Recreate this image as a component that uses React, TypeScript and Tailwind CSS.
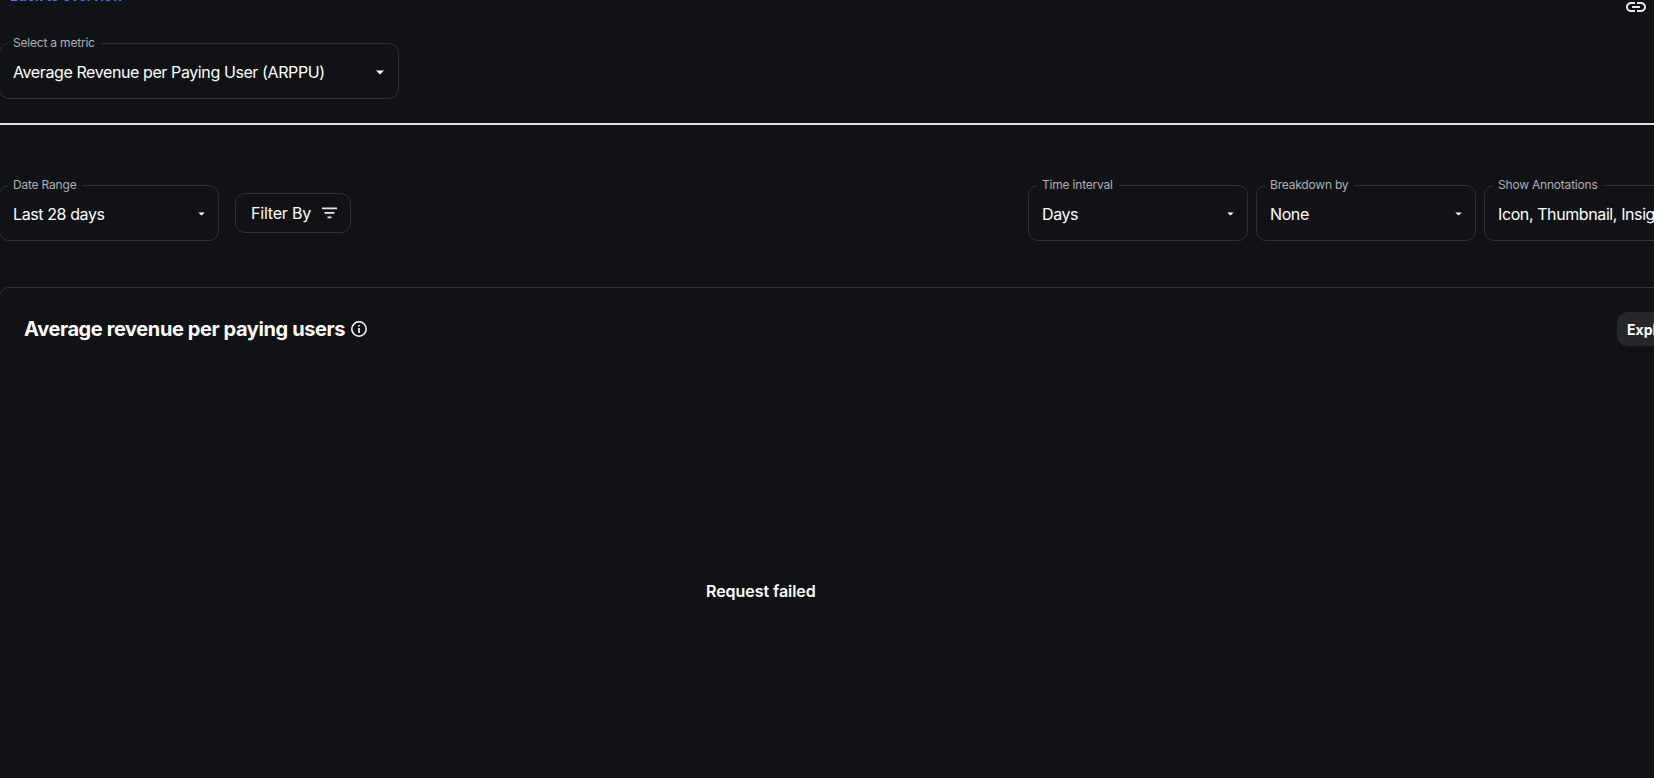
import type { ReactNode } from 'react';

const FONT = "font-['Inter','Noto_Sans',sans-serif]";

function Caret({ small = false }: { small?: boolean }) {
  return (
    <svg width={small ? 7 : 8} height={small ? 4 : 5} viewBox="0 0 8 5" className="shrink-0 fill-white">
      <path d="M0 0.5h8L4 4.5z" />
    </svg>
  );
}

function SelectBox({
  label,
  value,
  className,
  caret = true,
  small = true,
}: {
  label: string;
  value: string;
  className: string;
  caret?: boolean;
  small?: boolean;
}) {
  return (
    <fieldset
      className={`h-[63px] shrink-0 rounded-[10px] border border-[#2e3034] pl-[13px] ${small ? 'pr-[13px]' : 'pr-[14px]'} ${className}`}
    >
      <legend className="ml-[-5px] pl-[5px] pr-[6px] text-[12px] leading-[14px] tracking-[-0.2px] text-[#aeb0b4]">
        {label}
      </legend>
      <div className="flex h-[44px] items-center justify-between">
        <span className="whitespace-nowrap text-[16px] tracking-[-0.4px] text-white">{value}</span>
        {caret && <Caret small={small} />}
      </div>
    </fieldset>
  );
}

function Row({ children, className }: { children: ReactNode; className: string }) {
  return <div className={`flex items-center ${className}`}>{children}</div>;
}

export default function App() {
  return (
    <div className={`h-[778px] w-[1654px] overflow-hidden bg-[#111216] ${FONT}`}>
      {/* page is scrolled, top bar is cut off */}
      <div className="ml-[10px] mr-[6px] mt-[-14px] flex h-[22px] items-end justify-between">
        <a className="mb-[4px] text-[14px] font-semibold leading-[17px] tracking-[-0.15px] text-[#3e7bfa]">
          Back to overview
        </a>
        <svg width="24" height="24" viewBox="0 0 24 24" className="mb-[-11px] fill-[#e6e6e6]">
          <path d="M3.9 12c0-1.71 1.39-3.1 3.1-3.1h4V7H7c-2.76 0-5 2.24-5 5s2.24 5 5 5h4v-1.9H7c-1.71 0-3.1-1.39-3.1-3.1zM8 13h8v-2H8v2zm9-6h-4v1.9h4c1.71 0 3.1 1.39 3.1 3.1s-1.39 3.1-3.1 3.1h-4V17h4c2.76 0 5-2.24 5-5s-2.24-5-5-5z" />
        </svg>
      </div>

      <Row className="ml-[-1px] mt-[28px]">
        <SelectBox
          label="Select a metric"
          value="Average Revenue per Paying User (ARPPU)"
          className="w-[400px]"
          small={false}
        />
      </Row>

      <div className="mt-[24px] h-[2px] bg-[#e4e4e4]" />

      <Row className="ml-[-1px] mt-[53px] justify-between">
        <div className="flex items-center">
          <SelectBox label="Date Range" value="Last 28 days" className="w-[220px]" />
          <button className="ml-[16px] mt-[6px] flex h-[40px] w-[116px] items-center justify-center gap-[11px] rounded-[10px] border border-[#2e3034] pl-[2px] text-[16px] tracking-[-0.2px] text-white">
            Filter By
            <svg width="15" height="12" viewBox="0 0 15 12" className="fill-[#e6e6e6]">
              <path d="M0 0.5h15v1.7H0zM2.5 5h10v1.7H2.5zM5.5 9.6h4v1.7h-4z" />
            </svg>
          </button>
        </div>
        <div className="mr-[-180px] flex items-center gap-[8px]">
          <SelectBox label="Time interval" value="Days" className="w-[220px]" />
          <SelectBox label="Breakdown by" value="None" className="w-[220px]" />
          <SelectBox
            label="Show Annotations"
            value="Icon, Thumbnail, Insights"
            className="w-[350px]"
            caret={false}
          />
        </div>
      </Row>

      <div className="ml-[-1px] mr-[-76px] mt-[46px] h-[600px] rounded-[10px] border border-[#2e3034]">
        <div className="flex items-center justify-between px-[24px] pt-[23px]">
          <div className="flex items-center gap-[5px]">
            <h2 className="text-[20px] font-bold leading-[36px] tracking-[-0.4px] text-white">
              Average revenue per paying users
            </h2>
            <svg width="18" height="18" viewBox="0 0 18 18" className="fill-none stroke-white">
              <circle cx="9" cy="9" r="7.2" strokeWidth="1.5" />
              <path d="M9 8v5M9 5v1.6" strokeWidth="1.6" />
            </svg>
          </div>
          <button className="flex h-[34px] w-[88px] items-center rounded-[10px] bg-[#26272b] pl-[10px] text-[14px] font-bold text-white">
            Explore
          </button>
        </div>
        <div className="mt-[232px] pl-[706px] text-[16px] font-semibold tracking-[-0.05px] text-white">
          Request failed
        </div>
      </div>
    </div>
  );
}
